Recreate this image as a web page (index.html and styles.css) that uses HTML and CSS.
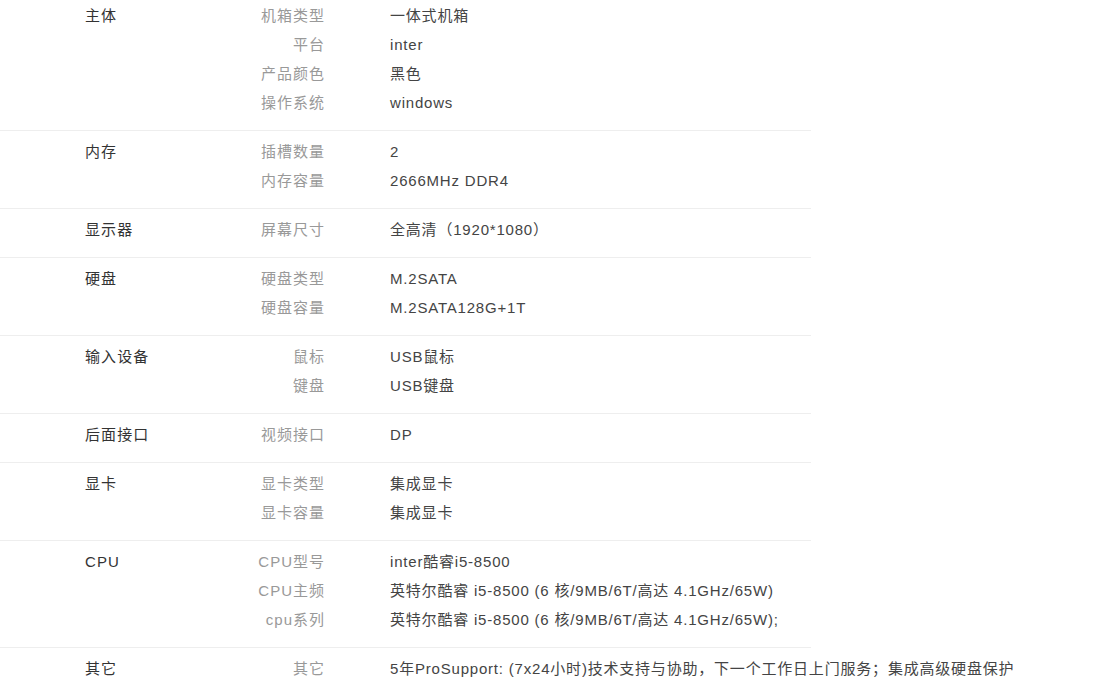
FILE: index.html
```html
<!DOCTYPE html>
<html lang="zh-CN">
<head>
<meta charset="utf-8">
<title>规格参数</title>
<link rel="stylesheet" href="styles.css">
</head>
<body>
<div class="specs">
  <div class="group">
    <div class="group-name">主体</div>
    <div class="items">
      <div class="item"><span class="key">机箱类型</span><span class="val">一体式机箱</span></div>
      <div class="item"><span class="key">平台</span><span class="val">inter</span></div>
      <div class="item"><span class="key">产品颜色</span><span class="val">黑色</span></div>
      <div class="item"><span class="key">操作系统</span><span class="val">windows</span></div>
    </div>
  </div>
  <div class="group">
    <div class="group-name">内存</div>
    <div class="items">
      <div class="item"><span class="key">插槽数量</span><span class="val">2</span></div>
      <div class="item"><span class="key">内存容量</span><span class="val">2666MHz DDR4</span></div>
    </div>
  </div>
  <div class="group">
    <div class="group-name">显示器</div>
    <div class="items">
      <div class="item"><span class="key">屏幕尺寸</span><span class="val">全高清（1920*1080）</span></div>
    </div>
  </div>
  <div class="group">
    <div class="group-name">硬盘</div>
    <div class="items">
      <div class="item"><span class="key">硬盘类型</span><span class="val">M.2SATA</span></div>
      <div class="item"><span class="key">硬盘容量</span><span class="val">M.2SATA128G+1T</span></div>
    </div>
  </div>
  <div class="group">
    <div class="group-name">输入设备</div>
    <div class="items">
      <div class="item"><span class="key">鼠标</span><span class="val">USB鼠标</span></div>
      <div class="item"><span class="key">键盘</span><span class="val">USB键盘</span></div>
    </div>
  </div>
  <div class="group">
    <div class="group-name">后面接口</div>
    <div class="items">
      <div class="item"><span class="key">视频接口</span><span class="val">DP</span></div>
    </div>
  </div>
  <div class="group">
    <div class="group-name">显卡</div>
    <div class="items">
      <div class="item"><span class="key">显卡类型</span><span class="val">集成显卡</span></div>
      <div class="item"><span class="key">显卡容量</span><span class="val">集成显卡</span></div>
    </div>
  </div>
  <div class="group">
    <div class="group-name">CPU</div>
    <div class="items">
      <div class="item"><span class="key">CPU型号</span><span class="val">inter酷睿i5-8500</span></div>
      <div class="item"><span class="key">CPU主频</span><span class="val">英特尔酷睿 i5-8500 (6 核/9MB/6T/高达 4.1GHz/65W)</span></div>
      <div class="item"><span class="key">cpu系列</span><span class="val">英特尔酷睿 i5-8500 (6 核/9MB/6T/高达 4.1GHz/65W);</span></div>
    </div>
  </div>
  <div class="group">
    <div class="group-name">其它</div>
    <div class="items">
      <div class="item"><span class="key">其它</span><span class="val">5年ProSupport: (7x24小时)技术支持与协助，下一个工作日上门服务；集成高级硬盘保护</span></div>
    </div>
  </div>
</div>
</body>
</html>
```

FILE: styles.css
```css
html, body {
  margin: 0;
  padding: 0;
  background: #fff;
}

body {
  font-family: "Liberation Sans", Arial, "Noto Sans CJK SC", sans-serif;
  font-size: 15px;
  letter-spacing: 0.8px;
  color: #444;
}

.specs {
  width: 811px;
  margin-top: -5px;
}

.group {
  display: flex;
  padding: 6px 0 13px;
  border-bottom: 1px solid #eee;
}

.group:last-child {
  border-bottom: none;
}

.group-name {
  width: 85px;
  padding-left: 85px;
  line-height: 29px;
  color: #333;
  letter-spacing: 1.1px;
  flex: none;
}

.items {
  display: flex;
  flex-direction: column;
}

.item {
  display: flex;
  line-height: 29px;
  white-space: nowrap;
}

.key {
  width: 155px;
  text-align: right;
  color: #999;
  letter-spacing: 1px;
  margin-right: 65px;
  flex: none;
}

.val {
  color: #444;
}
```
